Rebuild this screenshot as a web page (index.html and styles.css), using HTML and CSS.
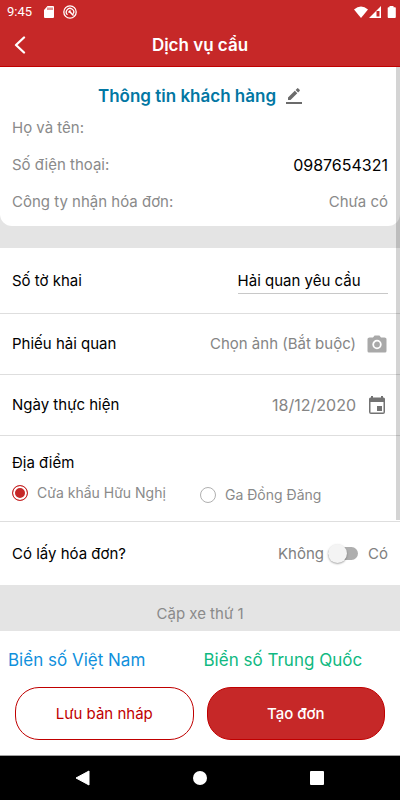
FILE: index.html
```html
<!DOCTYPE html>
<html lang="vi">
<head>
<meta charset="utf-8">
<meta name="viewport" content="width=device-width, initial-scale=1">
<title>Dịch vụ cẩu</title>
<link rel="stylesheet" href="styles.css">
</head>
<body>
<div class="app">
  <header class="top">
    <div class="status">
      <span class="time">9:45</span>
      <svg class="sd" width="10" height="12" viewBox="0 0 10 12" aria-hidden="true"><path fill="#fff" fill-rule="evenodd" d="M3.5 0H9a1 1 0 0 1 1 1v10a1 1 0 0 1-1 1H1a1 1 0 0 1-1-1V4zM3.5 1.5v2.5h1V1.500zM5.500 1.500v2.500h1V1.500zM7.500 1.500v2.500h1V1.500z"/></svg>
      <svg class="ring" width="14" height="14" viewBox="0 0 14 14" fill="none" stroke="#fff" aria-hidden="true"><circle cx="7" cy="7" r="6.200" stroke-width="1.300"/><path stroke-width="1.300" d="M4.500 9.800A3.700 3.700 0 1 1 10.300 8.800"/><path stroke-width="1.600" d="M6 6l4.500 4.500M5.500 7.500L7.500 5.500"/></svg>
      <svg class="signals" width="42" height="13" viewBox="0 0 42 13" fill="#fff" aria-hidden="true"><path d="M0 3.500Q7-2.500 14 3.500L7 12z"/><path fill-rule="evenodd" d="M27 0v12H15zM25.500 5h-3V10.500h3z"/><path d="M35.500 0h4v1.200H41q.8 0 .8.800v9q0 1-.8 1h-6.500q-.8 0-.8-1V2q0-.8.8-.8h1z"/></svg>
    </div>
    <div class="bar">
      <button class="back" type="button" aria-label="Quay lại"><svg width="12" height="18" viewBox="0 0 12 18" fill="none" stroke="#fff" stroke-width="2.300" stroke-linecap="round" stroke-linejoin="round"><path d="M10 1.500L2 9l8 7.500"/></svg></button>
      <h1>Dịch vụ cẩu</h1>
    </div>
  </header>

  <main class="content">
    <section class="customer">
      <div class="customer-head">
        <h2>Thông tin khách hàng</h2>
        <button class="edit" type="button" aria-label="Sửa"><svg width="16" height="16" viewBox="0 0 16 16" fill="#6b6b6b"><path d="M0 14h16v2H0zM2 12V9.500L8.800 2.700l2.500 2.500L4.500 12zM9.600 1.900L11.100.4q.6-.6 1.200 0l1.300 1.300q.6.600 0 1.200L12.100 4.400z"/></svg></button>
      </div>
      <dl>
        <div class="info"><dt>Họ và tên:</dt><dd></dd></div>
        <div class="info"><dt>Số điện thoại:</dt><dd class="number phone">0987654321</dd></div>
        <div class="info"><dt>Công ty nhận hóa đơn:</dt><dd>Chưa có</dd></div>
      </dl>
    </section>

    <form class="form">
      <div class="row row-first">
        <label for="declaration">Số tờ khai</label>
        <input class="field" id="declaration" type="text" value="Hải quan yêu cầu">
      </div>
      <div class="row">
        <span id="photo">Phiếu hải quan</span>
        <button class="picker" type="button" aria-describedby="photo">Chọn ảnh (Bắt buộc)<svg width="22" height="20" viewBox="0 0 22 20" aria-hidden="true"><path fill="#a9a9a9" d="M3.500 3.500h3.500l1.600-2h4.800l1.600 2h3.500Q20.500 3.500 20.500 5v12q0 1.500-1.500 1.500H3Q1.500 18.500 1.500 17V5q0-1.500 2-1.500z"/><circle cx="11" cy="10.500" r="3.800" fill="none" stroke="#fff" stroke-width="1.800"/></svg></button>
      </div>
      <div class="row">
        <span id="date">Ngày thực hiện</span>
        <button class="picker number" type="button" aria-describedby="date">18/12/2020<svg width="22" height="20" viewBox="0 0 22 20" aria-hidden="true"><path fill="#737373" fill-rule="evenodd" d="M5 1h2v1.500h8V1h2v1.500h.5Q19 2.500 19 4v13q0 2-2 2H5q-2 0-2-2V4q0-1.500 1.500-1.500H5zM4.500 7v10.500h13V7z"/><path fill="#737373" d="M11 11h5v5h-5z"/></svg></button>
      </div>
      <fieldset class="places">
        <legend>Địa điểm</legend>
        <div class="options">
          <label class="option"><input type="radio" name="place" checked>Cửa khẩu Hữu Nghị</label>
          <label class="option second"><input type="radio" name="place">Ga Đồng Đăng</label>
        </div>
      </fieldset>
      <div class="row">
        <label for="invoice">Có lấy hóa đơn?</label>
        <div class="toggle"><span>Không</span><input class="switch" id="invoice" type="checkbox" role="switch"><span>Có</span></div>
      </div>
    </form>

    <h3 class="pair">Cặp xe thứ 1</h3>
    <div class="plates"><span class="vn">Biển số Việt Nam</span><span class="cn">Biển số Trung Quốc</span></div>
    <span class="scrollbar"></span>
  </main>

  <footer class="actions">
    <button class="btn outline" type="button">Lưu bản nháp</button>
    <button class="btn filled" type="button">Tạo đơn</button>
  </footer>

  <nav class="system">
    <button type="button" aria-label="Trở về"><svg width="16" height="16" viewBox="0 0 16 16" fill="#fff"><path d="M14 1v14L1 8z" stroke="#fff" stroke-linejoin="round"/></svg></button>
    <button type="button" aria-label="Trang chủ"><svg width="16" height="16" viewBox="0 0 16 16" fill="#fff"><circle cx="8" cy="8" r="7"/></svg></button>
    <button type="button" aria-label="Gần đây"><svg width="16" height="16" viewBox="0 0 16 16" fill="#fff"><rect x="1" y="1" width="14" height="14" rx="1"/></svg></button>
  </nav>
</div>
</body>
</html>
```
FILE: styles.css
```css
* { box-sizing: border-box; }

body {
  margin: 0;
  background: #fff;
  color: #000;
  font: 15px/20px Inter, "Liberation Sans", sans-serif;
}

h1, h2, h3, dl, dd { margin: 0; }

button {
  padding: 0;
  border: 0;
  background: none;
  color: inherit;
  font: inherit;
}

svg { display: block; flex: none; }

.app {
  display: flex;
  flex-direction: column;
  min-height: 100vh;
}

.top {
  background: #c62828;
  border-bottom: 1px solid #c00000;
  color: #fff;
}

.status {
  display: flex;
  align-items: center;
  height: 24px;
  padding: 0 4px 0 7px;
}

.time { font: 13px/24px Roboto, sans-serif; }
.sd { margin-left: 12px; }
.ring { margin-left: 9px; }
.signals { margin-left: auto; }

.bar {
  display: grid;
  grid-template-columns: 40px 1fr 40px;
  align-items: center;
  height: 42px;
}

.back { padding-left: 14px; }

h1 {
  font-size: 17px;
  line-height: 24px;
  font-weight: 600;
  text-align: center;
}

.content {
  position: relative;
  flex: 1;
  background: #e4e4e4;
}

.customer {
  padding: 16px 12px 14px;
  border-radius: 0 0 12px 12px;
  background: #fff;
}

.customer-head {
  display: flex;
  justify-content: center;
  align-items: center;
  gap: 10px;
  height: 26px;
}

h2 {
  color: #0277a3;
  font-size: 17px;
  line-height: 24px;
  font-weight: 600;
}

.info {
  display: flex;
  justify-content: space-between;
  margin-top: 17px;
  color: #8a8a8a;
}

.info:first-child { margin-top: 9px; }
.number { font-size: 16px; }
.phone { color: #000; }

.form {
  margin-top: 22px;
  background: #fff;
}

.row {
  display: flex;
  justify-content: space-between;
  align-items: center;
  height: 61px;
  padding: 0 12px;
  border-bottom: 1px solid #dedede;
}

.row-first { height: 66px; }

.row:last-child {
  height: 63px;
  border-bottom: 0;
}

.field {
  width: 40%;
  height: 26px;
  padding: 0;
  border: 0;
  border-bottom: 1px solid #c8c8c8;
  border-radius: 0;
  background: none;
  color: #000;
  font: inherit;
  outline: 0;
}

.picker {
  display: flex;
  align-items: center;
  gap: 10px;
  color: #858585;
}

.places {
  margin: 0;
  min-width: 0;
  padding: 17px 12px 16px;
  border: 0;
  border-bottom: 1px solid #dedede;
}

.places legend {
  float: left;
  width: 100%;
  padding: 0;
}

.options {
  clear: both;
  display: grid;
  grid-template-columns: 1fr 1fr;
  padding-top: 8px;
}

.option {
  display: flex;
  align-items: center;
  gap: 9px;
  height: 24px;
  color: #8a8a8a;
  font-size: 14px;
}

.option.second { padding-top: 4px; }

.option input {
  appearance: none;
  flex: none;
  width: 16px;
  height: 16px;
  margin: 0;
  border: 1px solid #b0b0b0;
  border-radius: 50%;
}

.option input:checked {
  border-color: #c62828;
  background: #c62828;
  box-shadow: inset 0 0 0 2px #fff;
}

.toggle {
  display: flex;
  align-items: center;
  color: #808080;
}

.switch {
  appearance: none;
  position: relative;
  width: 30px;
  height: 13px;
  margin: 0 10px 0 4px;
  border-radius: 7px;
  background: #aeaeae;
}

.switch::before {
  content: "";
  position: absolute;
  top: -3px;
  left: 0;
  width: 19px;
  height: 19px;
  border-radius: 50%;
  background: #f4f4f4;
  box-shadow: 0 1px 2px rgba(0, 0, 0, .35);
}

.pair {
  height: 46px;
  padding-top: 19px;
  color: #8a8a8a;
  font-size: 15px;
  font-weight: 400;
  text-align: center;
}

.plates {
  display: grid;
  grid-template-columns: 1fr 1fr;
  gap: 4px;
  padding: 17px 5px 15px 8px;
  background: #fff;
  font-size: 17px;
  line-height: 24px;
}

.vn { color: #1090dc; }
.cn { color: #10b981; }

.scrollbar {
  position: absolute;
  top: 0;
  right: 0;
  width: 4px;
  height: 73%;
  background: rgba(0, 0, 0, .17);
}

.actions {
  display: grid;
  grid-template-columns: 1fr 1fr;
  gap: 13px;
  padding: 0 15px 15px;
  background: #fff;
}

.btn {
  height: 53px;
  border: 1px solid #c00000;
  border-radius: 24px;
}

.outline { color: #c00000; }

.filled {
  background: #c62828;
  color: #fff;
  font-weight: 500;
}

.system {
  display: flex;
  justify-content: space-around;
  align-items: center;
  height: 45px;
  padding: 0 25px;
  border-top: 1px solid #a0a0a0;
  background: #000;
}
```
